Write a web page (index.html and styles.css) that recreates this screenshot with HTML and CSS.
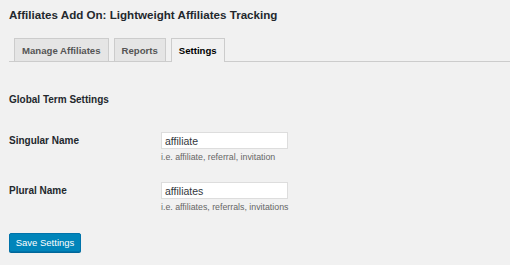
FILE: index.html
```html
<!DOCTYPE html>
<html>
<head>
<meta charset="utf-8">
<link rel="stylesheet" href="styles.css">
</head>
<body>
<div class="wrap">
  <h1 class="title">Affiliates Add On: Lightweight Affiliates Tracking</h1>
  <nav class="tabs">
    <a class="tab">Manage Affiliates</a>
    <a class="tab">Reports</a>
    <a class="tab active">Settings</a>
  </nav>
  <h2 class="section">Global Term Settings</h2>
  <div class="row first">
    <div class="label">Singular Name</div>
    <div class="field">
      <input class="input" type="text" value="affiliate">
      <p class="desc">i.e. affiliate, referral, invitation</p>
    </div>
  </div>
  <div class="row second">
    <div class="label">Plural Name</div>
    <div class="field">
      <input class="input" type="text" value="affiliates">
      <p class="desc">i.e. affiliates, referrals, invitations</p>
    </div>
  </div>
  <button class="btn">Save Settings</button>
</div>
</body>
</html>
```
FILE: styles.css
```css
html, body {
  margin: 0;
  padding: 0;
  background: #f1f1f1;
}
body {
  font-family: "Liberation Sans", Arial, sans-serif;
  color: #23282d;
  width: 510px;
  height: 265px;
  overflow: hidden;
}
.wrap {
  padding: 7px 0 0 9px;
}
.title {
  margin: 0;
  font-size: 11.6px;
  font-weight: bold;
  line-height: 16px;
}
.tabs {
  display: flex;
  margin-top: 15px;
  padding-left: 5px;
  border-bottom: 1px solid #cccccc;
  height: 23px;
}
.tab {
  display: flex;
  align-items: center;
  padding: 0 7px;
  margin-right: 5px;
  border: 1px solid #cccccc;
  border-bottom: none;
  background: #e5e5e5;
  color: #555555;
  font-size: 9.6px;
  font-weight: bold;
  height: 23px;
  box-sizing: border-box;
}
.tab.active {
  background: #f1f1f1;
  color: #000000;
  height: 24px;
}
.section {
  margin: 32px 0 0 0;
  font-size: 10px;
  font-weight: bold;
  line-height: 12px;
}
.row {
  display: flex;
}
.row.first {
  margin-top: 26px;
}
.row.second {
  margin-top: 20px;
}
.label {
  width: 152px;
  font-size: 10px;
  font-weight: bold;
  padding-top: 3px;
  line-height: 12px;
}
.field {
  display: flex;
  flex-direction: column;
}
.input {
  width: 127px;
  height: 17px;
  box-sizing: border-box;
  margin: 0;
  border: 1px solid #dddddd;
  background: #ffffff;
  font-family: inherit;
  font-size: 10.5px;
  color: #32373c;
  padding: 0 3px;
  outline: none;
}
.desc {
  margin: 3px 0 0 0;
  font-size: 8.8px;
  color: #666666;
  line-height: 10px;
}
.btn {
  display: block;
  margin-top: 21px;
  width: 72px;
  height: 19px;
  padding: 0;
  background: #0085ba;
  border: 1px solid #0073aa;
  border-radius: 2px;
  color: #ffffff;
  font-family: inherit;
  font-size: 9.5px;
  box-shadow: 0 1px 0 #006799;
}
```
